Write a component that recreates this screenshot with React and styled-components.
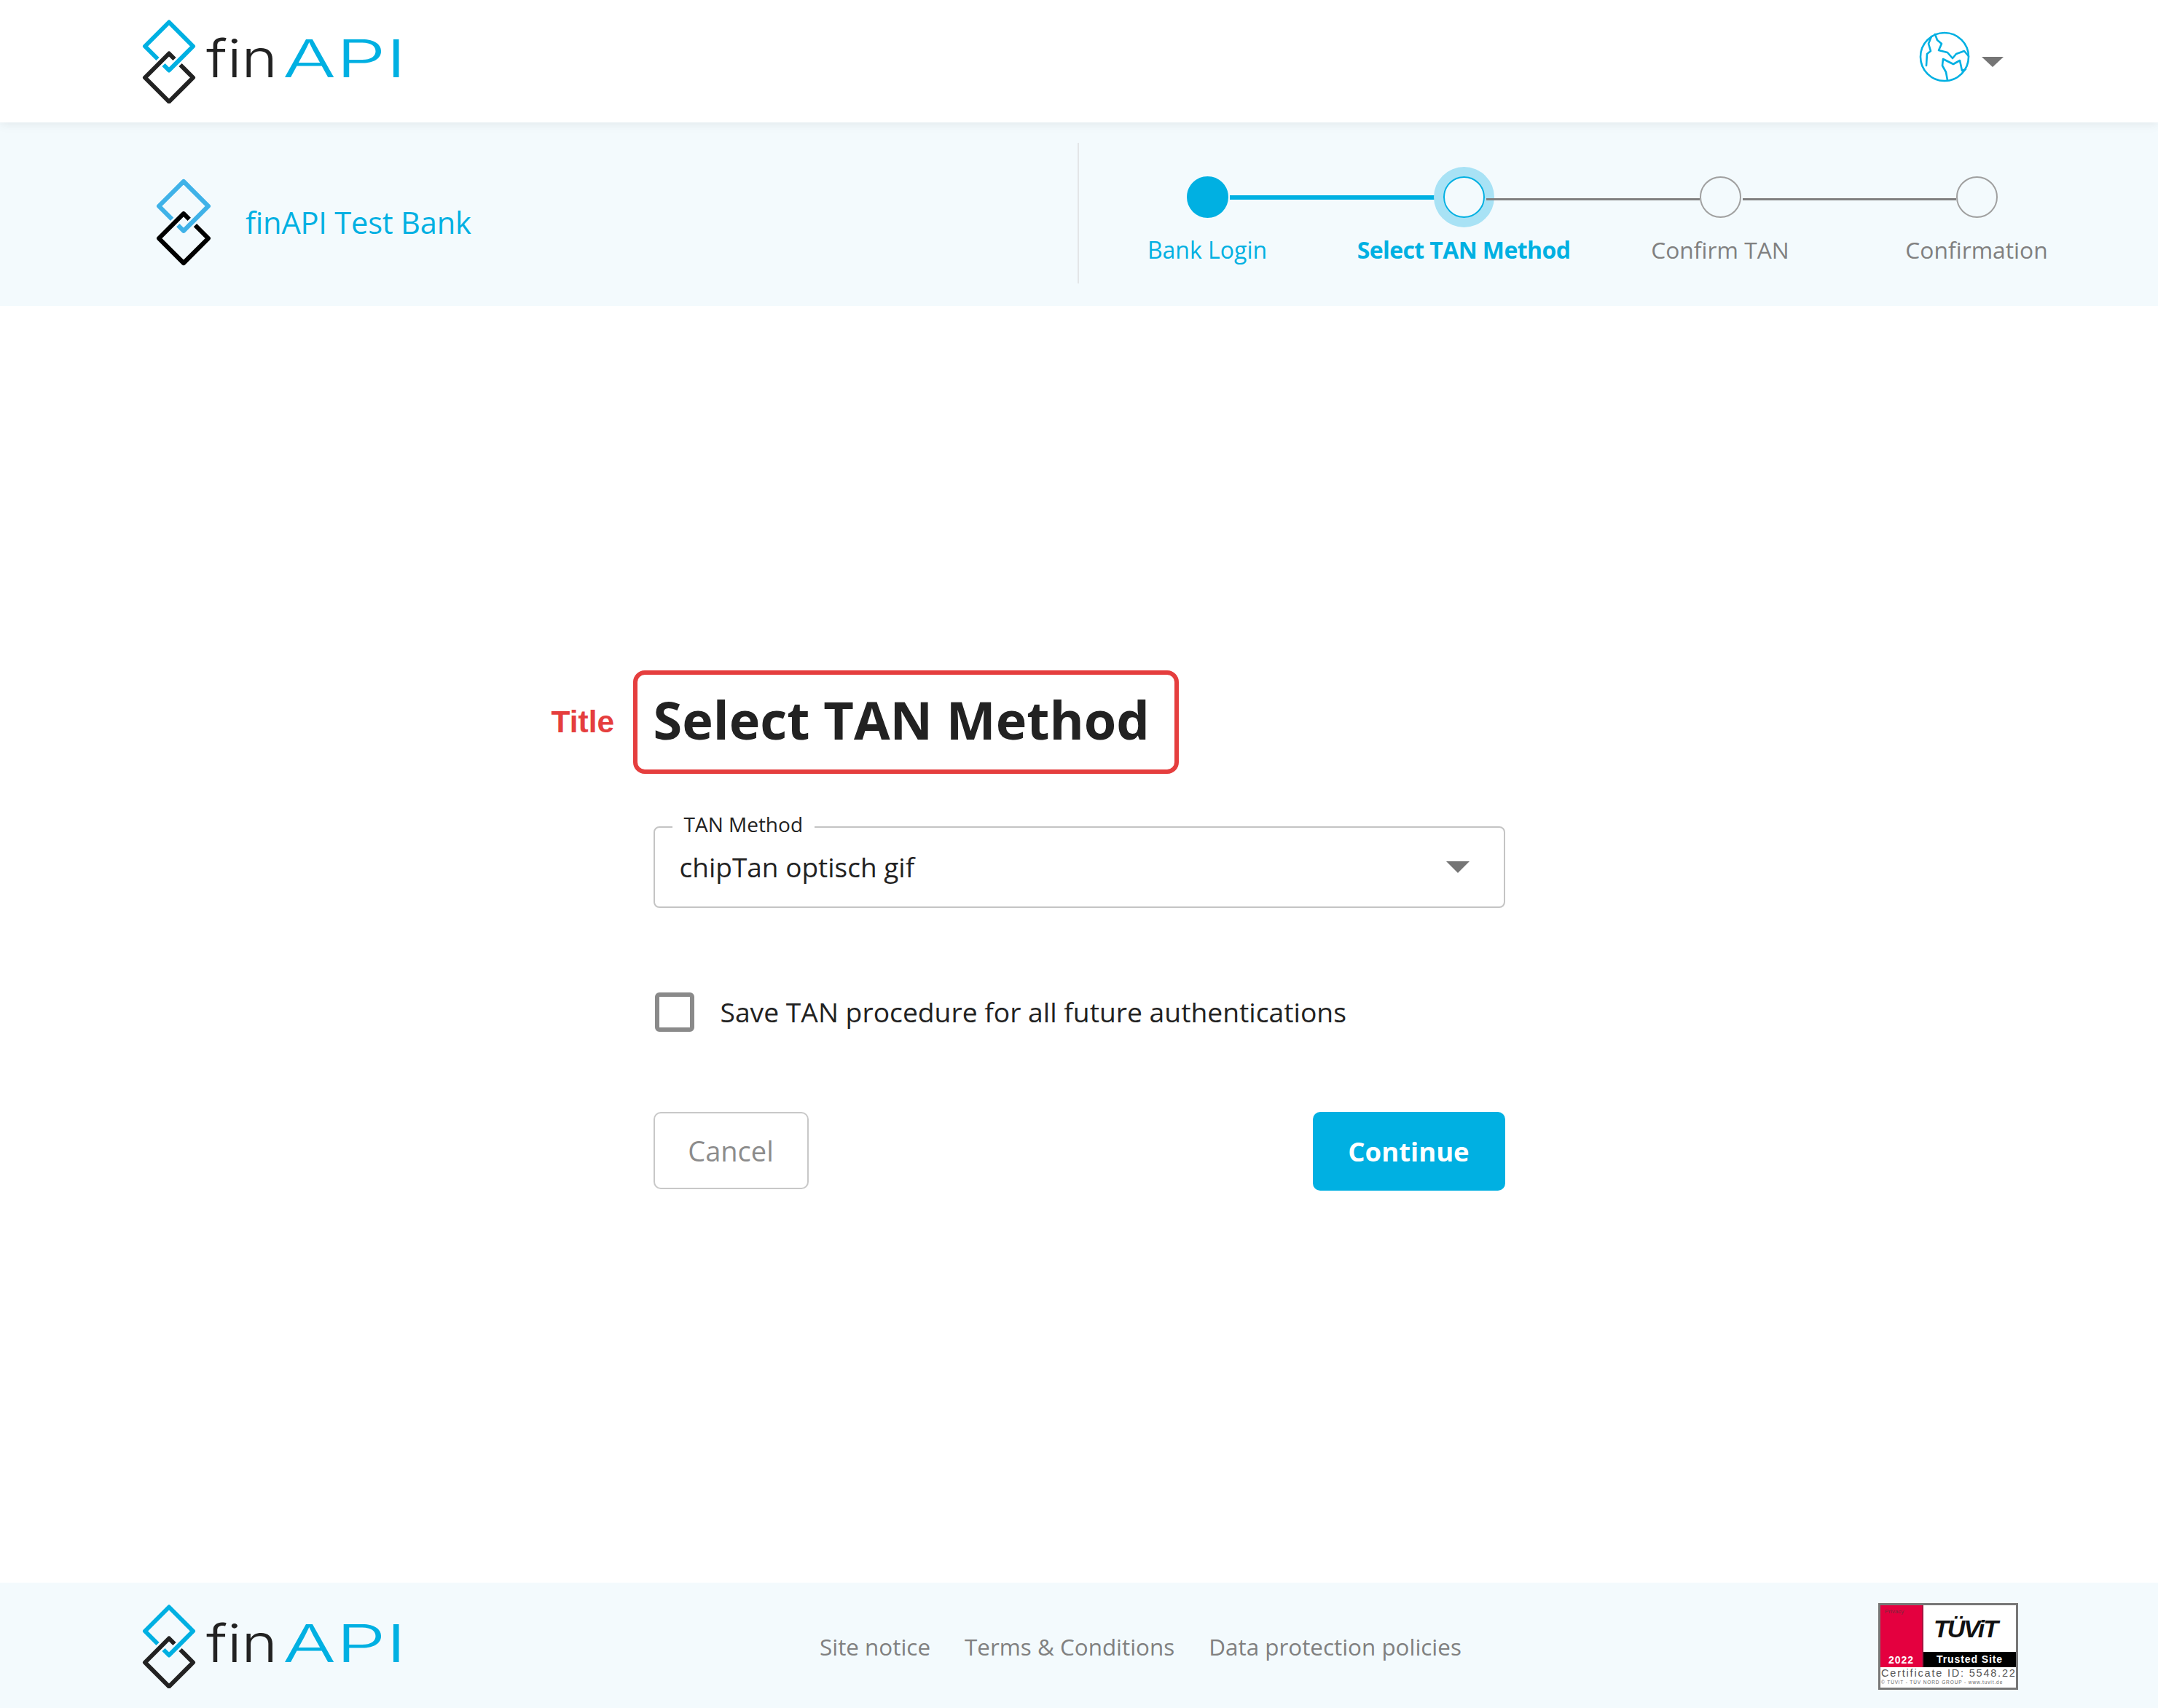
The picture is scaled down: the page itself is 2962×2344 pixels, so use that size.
import React from 'react'
import styled, { createGlobalStyle } from 'styled-components'

const BLUE = '#00b0e2'

const steps = [
  { label: 'Bank Login', state: 'done' },
  { label: 'Select TAN Method', state: 'active' },
  { label: 'Confirm TAN', state: 'todo' },
  { label: 'Confirmation', state: 'todo' }
]

function Diamonds ({ width, height, blue, black }) {
  return (
    <svg width={width} height={height} viewBox="0 0 74 116" fill="none" strokeWidth="6" strokeLinejoin="round" strokeLinecap="butt">
      <path d="M44.5 54 L37 46.5 L4 79.5 L37 112.5 L70 79.5 L52.5 62" stroke={black} />
      <path d="M21.5 54 L4 36.5 L37 3.5 L70 36.5 L37 69.5 L29.5 62" stroke={blue} />
    </svg>
  )
}

function FinLogo () {
  return (
    <svg width="355" height="115" viewBox="0 0 355 115">
      <g fill="none" strokeWidth="6" strokeLinejoin="round">
        <path d="M44.5 54 L37 46.5 L4 79.5 L37 112.5 L70 79.5 L52.5 62" stroke="#222222" />
        <path d="M21.5 54 L4 36.5 L37 3.5 L70 36.5 L37 69.5 L29.5 62" stroke={BLUE} />
      </g>
      <WordMark x="88" y="79" fill="#222222" textLength="98" lengthAdjust="spacingAndGlyphs">fin</WordMark>
      <WordMark x="193" y="79" fill={BLUE} textLength="170" lengthAdjust="spacingAndGlyphs">API</WordMark>
    </svg>
  )
}

function Globe () {
  return (
    <svg width="70" height="70" viewBox="0 0 70 70" fill="none" stroke={BLUE} strokeWidth="2.6" strokeLinejoin="round" strokeLinecap="round">
      <circle cx="35" cy="35" r="33" />
      <path d="M17 7 L13 17 L16 27 L11 31 L10 47" />
      <path d="M22 4 L25 12 L31 17 L27 26 L39 29 L46 37 L51 31 L62 27 L68 34" />
      <path d="M39 67 L37 56 L32 47 L33 38 L47 45 L56 40 L59 54 L64 52" />
    </svg>
  )
}

function App () {
  return (
    <Page>
      <GlobalStyle />
      <Header>
        <FinLogo />
        <LanguagePicker>
          <Globe />
          <Caret />
        </LanguagePicker>
      </Header>

      <Band>
        <BankSide>
          <Diamonds width={76} height={120} blue="#3fb2e8" black="#000000" />
          <BankName>finAPI Test Bank</BankName>
        </BankSide>
        <Stepper>
          {steps.map((step, index) => (
            <Step key={step.label}>
              <Dot $state={step.state} />
              {index < steps.length - 1 && <Connector $done={step.state === 'done'} />}
              <StepLabel $state={step.state}>{step.label}</StepLabel>
            </Step>
          ))}
        </Stepper>
      </Band>

      <Main>
        <Form>
          <TitleWrap>
            <Annotation>Title</Annotation>
            <Title>Select TAN Method</Title>
          </TitleWrap>

          <Field>
            <Legend>TAN Method</Legend>
            <FieldValue>chipTan optisch gif</FieldValue>
            <FieldArrow />
          </Field>

          <CheckRow>
            <CheckBox />
            <CheckLabel>Save TAN procedure for all future authentications</CheckLabel>
          </CheckRow>

          <Actions>
            <CancelButton>Cancel</CancelButton>
            <ContinueButton>Continue</ContinueButton>
          </Actions>
        </Form>
      </Main>

      <Footer>
        <FinLogo />
        <FooterLinks>
          <FooterLink>Site notice</FooterLink>
          <FooterLink>Terms &amp; Conditions</FooterLink>
          <FooterLink>Data protection policies</FooterLink>
        </FooterLinks>
        <Badge>
          <BadgeTop>
            <BadgeRed>
              <BadgePrivacy>Privacy</BadgePrivacy>
              <BadgeYear>2022</BadgeYear>
            </BadgeRed>
            <BadgeRight>
              <BadgeBrand>TÜViT</BadgeBrand>
              <BadgeTrusted>Trusted Site</BadgeTrusted>
            </BadgeRight>
          </BadgeTop>
          <BadgeCert>Certificate ID: 5548.22</BadgeCert>
          <BadgeFine>© TÜViT - TÜV NORD GROUP - www.tuvit.de</BadgeFine>
        </Badge>
      </Footer>
    </Page>
  )
}

const GlobalStyle = createGlobalStyle`
  html, body {
    margin: 0;
    padding: 0;
    background: #fff;
  }
  * {
    box-sizing: border-box;
  }
`

const Page = styled.div`
  display: flex;
  flex-direction: column;
  min-height: 2344px;
  font-family: 'Open Sans', 'Liberation Sans', sans-serif;
  color: #222;
`

const WordMark = styled.text`
  font-family: Inter, 'Liberation Sans', sans-serif;
  font-size: 72px;
  font-weight: 300;
`

const Header = styled.header`
  position: relative;
  z-index: 1;
  display: flex;
  align-items: center;
  justify-content: space-between;
  height: 168px;
  padding: 0 212px 0 195px;
  background: #fff;
  box-shadow: 0 2px 14px rgba(0, 0, 0, 0.08);
`

const LanguagePicker = styled.div`
  display: flex;
  align-items: center;
  gap: 16px;
  margin-top: -12px;
`

const Caret = styled.span`
  width: 0;
  height: 0;
  margin-top: 14px;
  border-left: 15px solid transparent;
  border-right: 15px solid transparent;
  border-top: 14px solid #757575;
`

const Band = styled.section`
  display: flex;
  height: 252px;
  padding: 28px 0 31px;
  background: #f3fafd;
`

const BankSide = styled.div`
  display: flex;
  align-items: center;
  gap: 47px;
  width: 1481px;
  padding: 25px 0 0 214px;
`

const BankName = styled.span`
  font-size: 41.6px;
  color: ${BLUE};
  letter-spacing: -0.2px;
`

const Stepper = styled.div`
  display: grid;
  grid-template-columns: repeat(4, 352px);
  border-left: 2px solid #e3e6e8;
  margin-left: -2px;
  padding-top: 46px;
`

const Step = styled.div`
  position: relative;
  display: flex;
  flex-direction: column;
  align-items: center;
`

const Dot = styled.span`
  width: 57px;
  height: 57px;
  border-radius: 50%;
  border: 2px solid ${({ $state }) => ($state === 'todo' ? '#a0a0a0' : BLUE)};
  background: ${({ $state }) => ($state === 'done' ? BLUE : 'transparent')};
  box-shadow: ${({ $state }) => ($state === 'active' ? '0 0 0 13px #a8e2f5' : 'none')};
`

const Connector = styled.span`
  position: absolute;
  left: calc(50% + 31px);
  width: 293px;
  top: ${({ $done }) => ($done ? '26px' : '30px')};
  height: ${({ $done }) => ($done ? '6px' : '3px')};
  background: ${({ $done }) => ($done ? BLUE : '#808080')};
`

const StepLabel = styled.span`
  margin-top: 22px;
  font-size: ${({ $state }) => ($state === 'todo' ? '31.8px' : '32px')};
  line-height: 44px;
  white-space: nowrap;
  font-weight: ${({ $state }) => ($state === 'active' ? 700 : 400)};
  letter-spacing: ${({ $state }) => ($state === 'active' ? '-0.6px' : '0')};
  color: ${({ $state }) => ($state === 'todo' ? '#808080' : BLUE)};
`

const Main = styled.main`
  flex: 1;
  display: flex;
  justify-content: center;
  padding-top: 500px;
  background: #fff;
`

const Form = styled.div`
  display: flex;
  flex-direction: column;
  width: 1169px;
`

const TitleWrap = styled.div`
  position: relative;
  align-self: flex-start;
  height: 142px;
  display: flex;
  align-items: center;
  &::after {
    content: '';
    position: absolute;
    top: 0;
    bottom: 0;
    left: -28px;
    right: -40px;
    border: 6px solid #e53e3e;
    border-radius: 16px;
  }
`

const Annotation = styled.span`
  position: absolute;
  left: -140px;
  top: 50%;
  transform: translateY(-50%);
  font-family: 'Liberation Sans', Arial, sans-serif;
  font-size: 42.5px;
  font-weight: 700;
  color: #e53e3e;
`

const Title = styled.h1`
  margin: -8px 0 0;
  font-size: 72px;
  line-height: 100px;
  font-weight: 700;
  color: #222;
  white-space: nowrap;
`

const Field = styled.div`
  position: relative;
  display: flex;
  align-items: center;
  height: 112px;
  margin-top: 72px;
  padding: 0 47px 0 34px;
  border: 2px solid #c4c4c4;
  border-radius: 8px;
`

const Legend = styled.span`
  position: absolute;
  left: 24px;
  top: -25px;
  padding: 0 16px;
  font-size: 28px;
  line-height: 40px;
  color: #222;
  background: #fff;
`

const FieldValue = styled.span`
  margin-top: -2px;
  font-size: 37px;
  color: #222;
`

const FieldArrow = styled.span`
  margin-left: auto;
  width: 0;
  height: 0;
  border-left: 16px solid transparent;
  border-right: 16px solid transparent;
  border-top: 16px solid #757575;
`

const CheckRow = styled.label`
  display: flex;
  align-items: center;
  gap: 36px;
  margin-top: 116px;
  padding-left: 2px;
`

const CheckBox = styled.span`
  width: 54px;
  height: 54px;
  border: 6px solid #8a8a8a;
  border-radius: 6px;
`

const CheckLabel = styled.span`
  margin-top: -2px;
  font-size: 37.25px;
  color: #222;
`

const Actions = styled.div`
  display: flex;
  align-items: flex-start;
  justify-content: space-between;
  margin-top: 110px;
`

const CancelButton = styled.button`
  width: 213px;
  height: 106px;
  padding-bottom: 2px;
  font-family: inherit;
  font-size: 38px;
  color: #8c8c8c;
  background: #fff;
  border: 2px solid #c8c8c8;
  border-radius: 10px;
`

const ContinueButton = styled.button`
  width: 264px;
  height: 108px;
  padding-bottom: 2px;
  font-family: inherit;
  font-size: 36.5px;
  font-weight: 700;
  color: #fff;
  background: ${BLUE};
  border: none;
  border-radius: 10px;
`

const Footer = styled.footer`
  display: flex;
  align-items: center;
  height: 172px;
  padding: 3px 192px 0 195px;
  background: #f3fafd;
`

const FooterLinks = styled.nav`
  display: flex;
  gap: 47px;
  margin-left: 575px;
`

const FooterLink = styled.a`
  font-size: 31.4px;
  color: #808080;
  white-space: nowrap;
`

const Badge = styled.div`
  display: flex;
  flex-direction: column;
  margin-left: auto;
  width: 192px;
  height: 119px;
  border: 3px solid #777;
  background: #fff;
  font-family: 'Liberation Sans', Arial, sans-serif;
  overflow: hidden;
`

const BadgeTop = styled.div`
  display: flex;
  height: 85px;
`

const BadgeRed = styled.div`
  display: flex;
  flex-direction: column;
  justify-content: space-between;
  width: 59px;
  padding: 4px 0 2px;
  background: #e4003f;
  border-right: 2px solid #a8123f;
`

const BadgePrivacy = styled.span`
  padding-left: 6px;
  font-size: 8px;
  color: #7a2a3c;
`

const BadgeYear = styled.span`
  text-align: center;
  font-size: 14px;
  font-weight: 700;
  letter-spacing: 1px;
  color: #fff;
`

const BadgeRight = styled.div`
  flex: 1;
  display: flex;
  flex-direction: column;
`

const BadgeBrand = styled.span`
  flex: 1;
  display: flex;
  align-items: center;
  justify-content: center;
  padding-right: 12px;
  font-size: 34px;
  font-weight: 700;
  font-style: italic;
  letter-spacing: -2px;
  color: #111;
`

const BadgeTrusted = styled.span`
  height: 21px;
  line-height: 21px;
  text-align: center;
  font-size: 14px;
  font-weight: 700;
  letter-spacing: 0.9px;
  color: #fff;
  background: #000;
`

const BadgeCert = styled.span`
  font-size: 14.5px;
  line-height: 17px;
  letter-spacing: 1.8px;
  color: #555;
  white-space: nowrap;
  padding-left: 1px;
`

const BadgeFine = styled.span`
  font-size: 6.5px;
  line-height: 8px;
  letter-spacing: 0.9px;
  color: #666;
  white-space: nowrap;
  padding-left: 1px;
`

export default App
